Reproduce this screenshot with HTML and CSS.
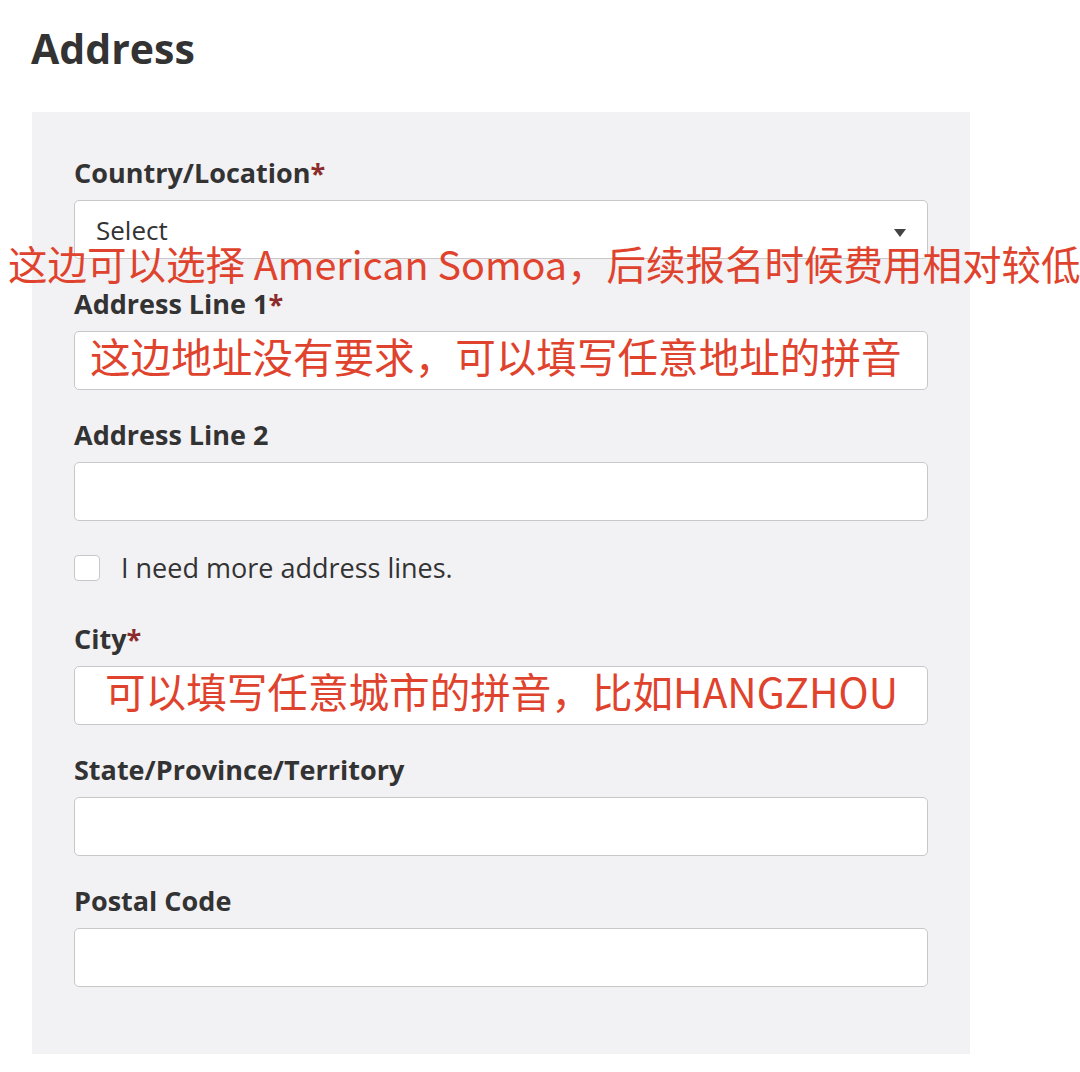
FILE: index.html
```html
<!DOCTYPE html>
<html lang="en">
<head>
    <meta charset="UTF-8">
    <title>Address</title>
    <link rel="stylesheet" href="styles.css">
</head>
<body>
    <div class="page">
        <h2 class="title">Address</h2>

        <form class="panel">
            <div class="field">
                <label>Country/Location<span class="req">*</span></label>
                <div class="input select">Select<span class="caret"></span></div>
            </div>

            <div class="field">
                <label>Address Line 1<span class="req">*</span></label>
                <div class="input"><span class="hint">这边地址没有要求，可以填写任意地址的拼音</span></div>
            </div>

            <div class="field">
                <label>Address Line 2</label>
                <div class="input"></div>
            </div>

            <div class="check">
                <span class="box"></span>
                <span>I need more address lines.</span>
            </div>

            <div class="field">
                <label>City<span class="req">*</span></label>
                <div class="input input-city"><span class="hint">可以填写任意城市的拼音，比如HANGZHOU</span></div>
            </div>

            <div class="field">
                <label>State/Province/Territory</label>
                <div class="input"></div>
            </div>

            <div class="field">
                <label>Postal Code</label>
                <div class="input"></div>
            </div>
        </form>

        <!-- annotation laid over the form -->
        <p class="note">这边可以选择 American Somoa，后续报名时候费用相对较低</p>
    </div>
</body>
</html>
```

FILE: styles.css
```css
body {
    margin: 0;
    background: #fff;
    font-family: 'Open Sans', 'Noto Sans', sans-serif;
    color: #333;
}
.page {
    position: relative;
    width: 1080px;
    height: 1072px;
    overflow: hidden;
}
.title {
    margin: 21px 0 37px 31px;
    font-size: 41px;
    line-height: 54px;
    font-weight: 700;
    color: #333;
}
.panel {
    margin: 0 0 0 32px;
    width: 938px;
    box-sizing: border-box;
    padding: 44px 42px 39px;
    background: #f2f1f3;
    display: flex;
    flex-direction: column;
}
.field {
    margin-bottom: 28px;
}
.field label {
    display: block;
    font-size: 27px;
    line-height: 34px;
    font-weight: 700;
    color: #333;
    margin-bottom: 10px;
}
.req {
    color: #8c2b2b;
}
.input {
    height: 59px;
    box-sizing: border-box;
    background: #fff;
    border: 1px solid #c8c8ca;
    border-radius: 5px;
    display: flex;
    align-items: center;
    padding-left: 15px;
}
.select {
    position: relative;
    padding-left: 21px;
    font-size: 26px;
    color: #333;
}
.caret {
    position: absolute;
    right: 21px;
    top: 28px;
    width: 0;
    height: 0;
    border-left: 6px solid transparent;
    border-right: 6px solid transparent;
    border-top: 8px solid #444;
}
.hint {
    font-family: 'Noto Sans CJK SC', sans-serif;
    font-size: 40.6px;
    line-height: 1;
    color: #e0432d;
    white-space: nowrap;
    margin-bottom: 9px;
}
.input-city {
    padding-left: 30px;
}
.check {
    display: flex;
    align-items: center;
    gap: 21px;
    margin: 6px 0 41px;
    font-size: 27px;
    line-height: 26px;
    color: #333;
}
.check .box {
    width: 26px;
    height: 26px;
    box-sizing: border-box;
    background: #fff;
    border: 1px solid #c8c8ca;
    border-radius: 4px;
}
.note {
    position: absolute;
    left: 8px;
    top: 240px;
    margin: 0;
    font-family: 'Noto Sans CJK SC', sans-serif;
    font-size: 39.5px;
    line-height: 46px;
    color: #e0432d;
    white-space: nowrap;
}
```
